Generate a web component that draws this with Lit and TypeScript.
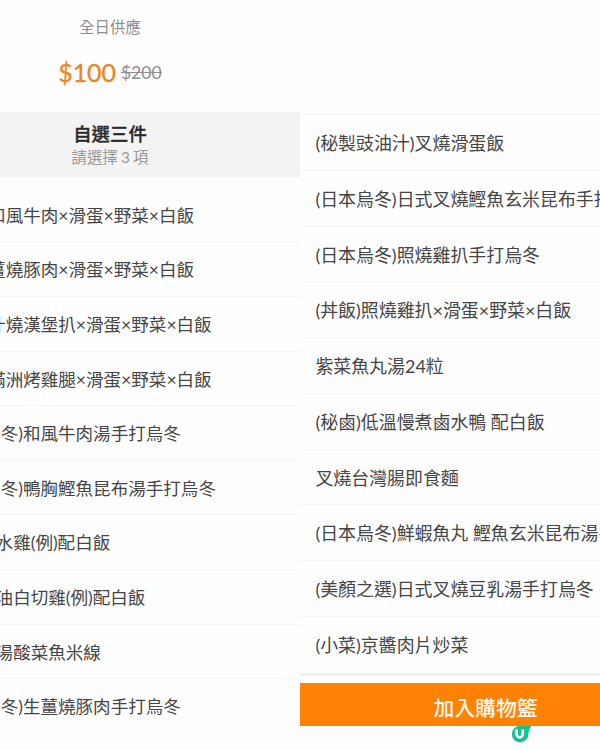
import { LitElement, html, css } from "lit";
import { customElement } from "lit/decorators.js";
import { styleMap } from "lit/directives/style-map.js";

interface Dish {
  text: string;
  start: number;
}

const COMBO: Dish[] = [
  { text: "和風牛肉×滑蛋×野菜×白飯", start: -11.9 },
  { text: "薑燒豚肉×滑蛋×野菜×白飯", start: -11.9 },
  { text: "汁燒漢堡扒×滑蛋×野菜×白飯", start: -11.9 },
  { text: "滿洲烤雞腿×滑蛋×野菜×白飯", start: -11.9 },
  { text: "冬)和風牛肉湯手打烏冬", start: 0.7 },
  { text: "冬)鴨胸鰹魚昆布湯手打烏冬", start: 0.7 },
  { text: "水雞(例)配白飯", start: -4.4 },
  { text: "油白切雞(例)配白飯", start: -4.4 },
  { text: "湯酸菜魚米線", start: -4.4 },
  { text: "冬)生薑燒豚肉手打烏冬", start: 0.7 },
];

const MORE: string[] = [
  "(秘製豉油汁)叉燒滑蛋飯",
  "(日本烏冬)日式叉燒鰹魚玄米昆布手打烏冬",
  "(日本烏冬)照燒雞扒手打烏冬",
  "(丼飯)照燒雞扒×滑蛋×野菜×白飯",
  "紫菜魚丸湯24粒",
  "(秘鹵)低溫慢煮鹵水鴨 配白飯",
  "叉燒台灣腸即食麵",
  "(日本烏冬)鮮蝦魚丸 鰹魚玄米昆布湯手打烏冬",
  "(美顏之選)日式叉燒豆乳湯手打烏冬",
  "(小菜)京醬肉片炒菜",
];

@customElement("app-root")
export class AppRoot extends LitElement {
  static styles = css`
    :host {
      display: grid;
      grid-template-columns: 300px 300px;
      width: 600px;
      height: 750px;
      overflow: hidden;
      background: #fefefe;
      color: #454545;
      font-family: Lato, "Noto Sans CJK TC", sans-serif;
      position: relative;
    }
    .col {
      display: flex;
      flex-direction: column;
      min-width: 0;
      min-height: 0;
      overflow: hidden;
    }
    .intro {
      box-sizing: border-box;
      height: 112px;
      width: 220px;
      padding-top: 15px;
      display: flex;
      flex-direction: column;
      align-items: center;
    }
    .hours {
      font-size: 15.4px;
      line-height: 24px;
      color: #8d8d8d;
    }
    .price {
      display: flex;
      align-items: center;
      gap: 5px;
      margin-top: 16px;
      line-height: 32px;
    }
    .now {
      font-size: 25px;
      color: #ee8520;
      letter-spacing: -0.1px;
      -webkit-text-stroke: 0.3px #ee8520;
    }
    .was {
      font-size: 17.6px;
      padding-top: 2px;
      color: #8d8d8d;
      text-decoration: line-through;
    }
    .head {
      height: 65px;
      box-sizing: border-box;
      padding-top: 9px;
      background: #f3f3f3;
    }
    .head-inner {
      width: 220px;
      text-align: center;
    }
    .title {
      font-size: 18.4px;
      line-height: 25px;
      font-weight: 500;
      font-family: "Noto Sans CJK TC", sans-serif;
      color: #292929;
      -webkit-text-stroke: 0.3px #292929;
    }
    .hint {
      font-size: 15.4px;
      line-height: 20px;
      margin-top: 1px;
      word-spacing: -0.7px;
      color: #9a9a9a;
    }
    .list {
      padding-top: 10.6px;
    }
    .row {
      box-sizing: border-box;
      height: 54.65px;
      line-height: 56.2px;
      border-bottom: 1px solid #f5f5f5;
      white-space: nowrap;
      font-size: 17.56px;
      overflow: hidden;
    }
    .row:last-child {
      border-bottom: 0;
    }
    .more {
      margin-top: 114px;
      border-top: 1px solid #f5f5f5;
    }
    .more .row {
      height: 55.75px;
      line-height: 57px;
      font-size: 17.93px;
      padding-left: 15.4px;
    }
    .bar {
      border-top: 3px solid #f0efef;
      padding-top: 7.5px;
    }
    .buy {
      display: block;
      width: 300px;
      height: 43px;
      padding: 4px 0 0 71px;
      box-sizing: border-box;
      border: 0;
      background: #ff8205;
      color: #fff8ec;
      font: 500 20.8px/38px "Noto Sans CJK TC", sans-serif;
      text-align: center;
    }
    .mark {
      position: absolute;
      left: 511px;
      top: 725px;
      width: 21px;
      height: 18px;
    }
  `;

  render() {
    return html`
      <section class="col">
        <div class="intro">
          <div class="hours">全日供應</div>
          <div class="price"><span class="now">$100</span><span class="was">$200</span></div>
        </div>
        <div class="head">
          <div class="head-inner">
            <div class="title">自選三件</div>
            <div class="hint">請選擇 3 項</div>
          </div>
        </div>
        <div class="list">
          ${COMBO.map(
            (d) => html`<div class="row" style=${styleMap({ textIndent: `${d.start}px` })}>${d.text}</div>`
          )}
        </div>
      </section>
      <section class="col">
        <div class="more">${MORE.map((t) => html`<div class="row">${t}</div>`)}</div>
        <div class="bar"><button class="buy">加入購物籃</button></div>
      </section>
      <svg class="mark" viewBox="0 0 21 18">
        <path d="M8.7 .7H20.4Q18 3.6 17.4 8.6A8.3 8.3 0 1 1 8.7 .7Z" fill="#12c48b" />
        <path d="M5.6 4.6v4.6a3.1 3.1 0 0 0 6.2 0V4.6" fill="none" stroke="#fff" stroke-width="2.7" />
      </svg>
    `;
  }
}
